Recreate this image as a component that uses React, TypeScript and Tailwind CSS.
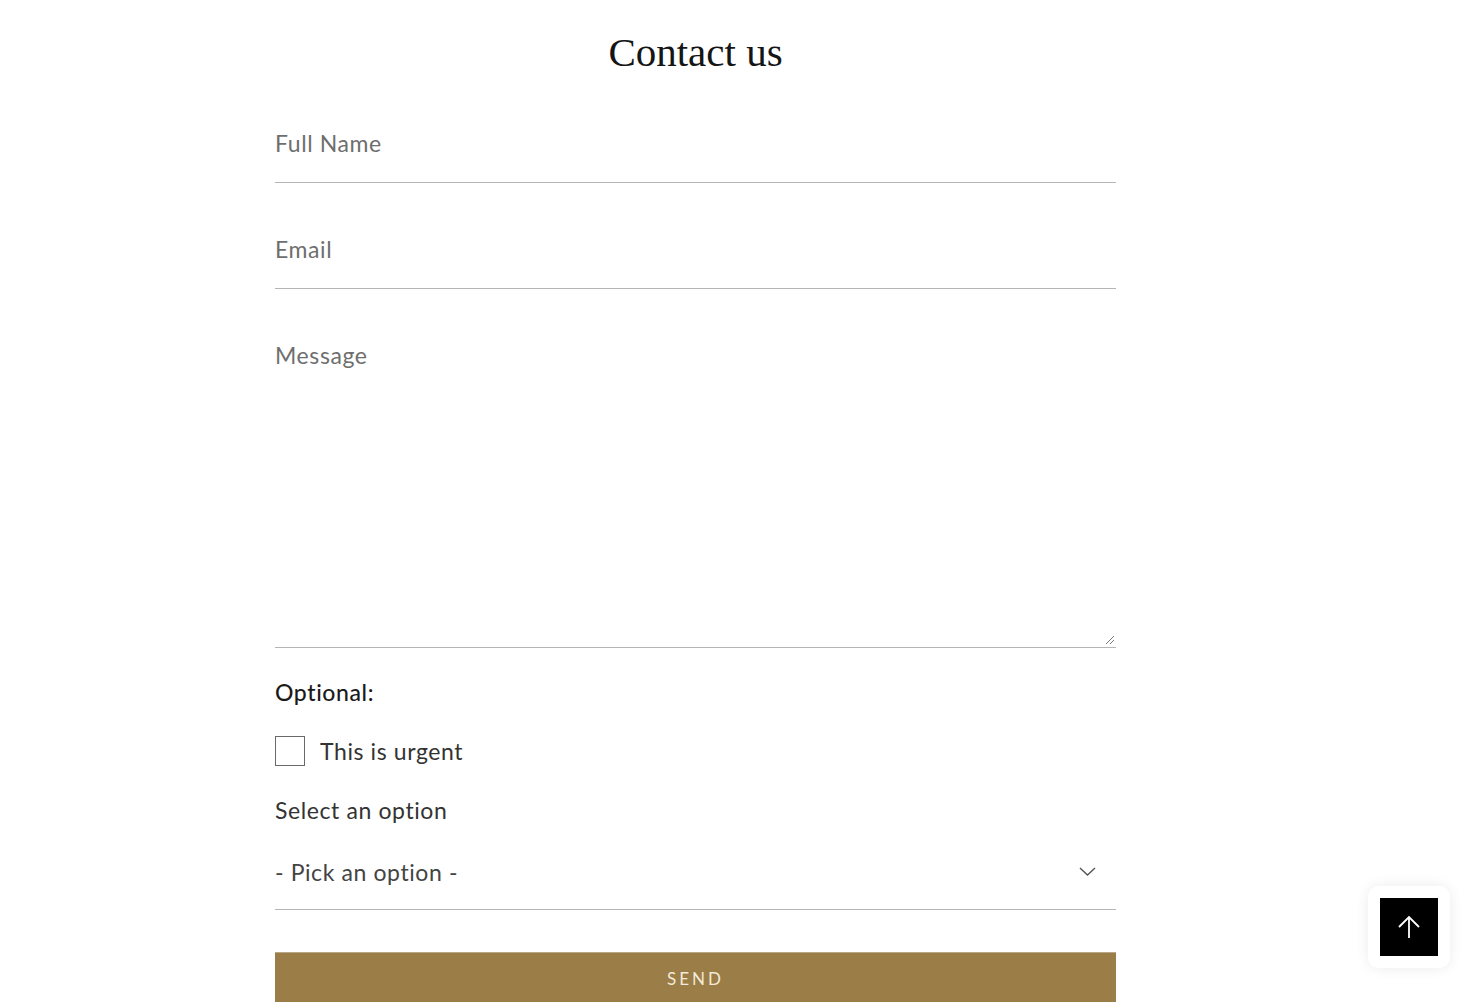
import React from "react";

export default function App() {
  const sans = { fontFamily: "Lato, 'Noto Sans', sans-serif" };
  return (
    <div className="min-h-[1002px] bg-white relative overflow-hidden" style={sans}>
      <div className="ml-[275px] w-[841px] flex flex-col">
        <h1
          className="mt-[30px] h-[44px] text-center text-[41px] leading-[44px] text-[#151515]"
          style={{ fontFamily: "'Liberation Serif', serif" }}
        >
          Contact us
        </h1>
        <div className="mt-[38px] h-[71px] border-b border-[#b5b5b5] pt-[17px]">
          <div className="text-[23px] leading-[28px] text-[#6e6e6e] tracking-[0.6px]">Full Name</div>
        </div>
        <div className="mt-[35px] h-[71px] border-b border-[#b5b5b5] pt-[17px]">
          <div className="text-[23px] leading-[28px] text-[#6e6e6e] tracking-[0.6px]">Email</div>
        </div>
        <div className="mt-[35px] h-[324px] border-b border-[#b5b5b5] pt-[17px] relative">
          <div className="text-[23px] leading-[28px] text-[#6e6e6e] tracking-[0.6px]">Message</div>
          <svg className="absolute right-[1px] bottom-[2px]" width="11" height="11" viewBox="0 0 11 11">
            <path d="M10 2 L2 10 M10 6 L6 10" stroke="#7a7a7a" strokeWidth="1" fill="none" />
          </svg>
        </div>
        <div className="mt-[30px] h-[28px] text-[23px] leading-[28px] text-[#1a1a1a] font-medium tracking-[0.6px]">
          Optional:
        </div>
        <div className="mt-[30px] h-[30px] flex items-center gap-[15px]">
          <div className="w-[30px] h-[30px] border border-[#6a6a6a]" />
          <span className="text-[23px] leading-[28px] text-[#333] tracking-[0.6px]">This is urgent</span>
        </div>
        <div className="mt-[30px] h-[28px] text-[23px] leading-[28px] text-[#333] tracking-[0.6px]">
          Select an option
        </div>
        <div className="h-[86px] border-b border-[#b5b5b5] pt-[34px] flex justify-between items-start">
          <span className="text-[23px] leading-[28px] text-[#444] tracking-[0.6px]">- Pick an option -</span>
          <svg className="mr-[20px] mt-[8px]" width="17" height="11" viewBox="0 0 17 11">
            <path d="M1 2 L8.5 9 L16 2" stroke="#555" strokeWidth="1.4" fill="none" />
          </svg>
        </div>
        <button className="mt-[42px] h-[60px] bg-[#9a7d47] border-t border-[#b8a888] text-[#f3ead8] text-[17px] tracking-[3px] flex items-center justify-center pb-[8px]">
          SEND
        </button>
      </div>
      <div className="absolute right-[20px] bottom-[34px] w-[82px] h-[82px] rounded-[10px] bg-white shadow-[0_0_14px_rgba(0,0,0,0.08)] flex items-center justify-center mb-[10px]">
        <div className="w-[58px] h-[58px] bg-black flex items-center justify-center">
          <svg width="26" height="26" viewBox="0 0 26 26">
            <path d="M13 24 V3 M3 13 L13 3 L23 13" stroke="#fff" strokeWidth="1.8" fill="none" />
          </svg>
        </div>
      </div>
    </div>
  );
}
